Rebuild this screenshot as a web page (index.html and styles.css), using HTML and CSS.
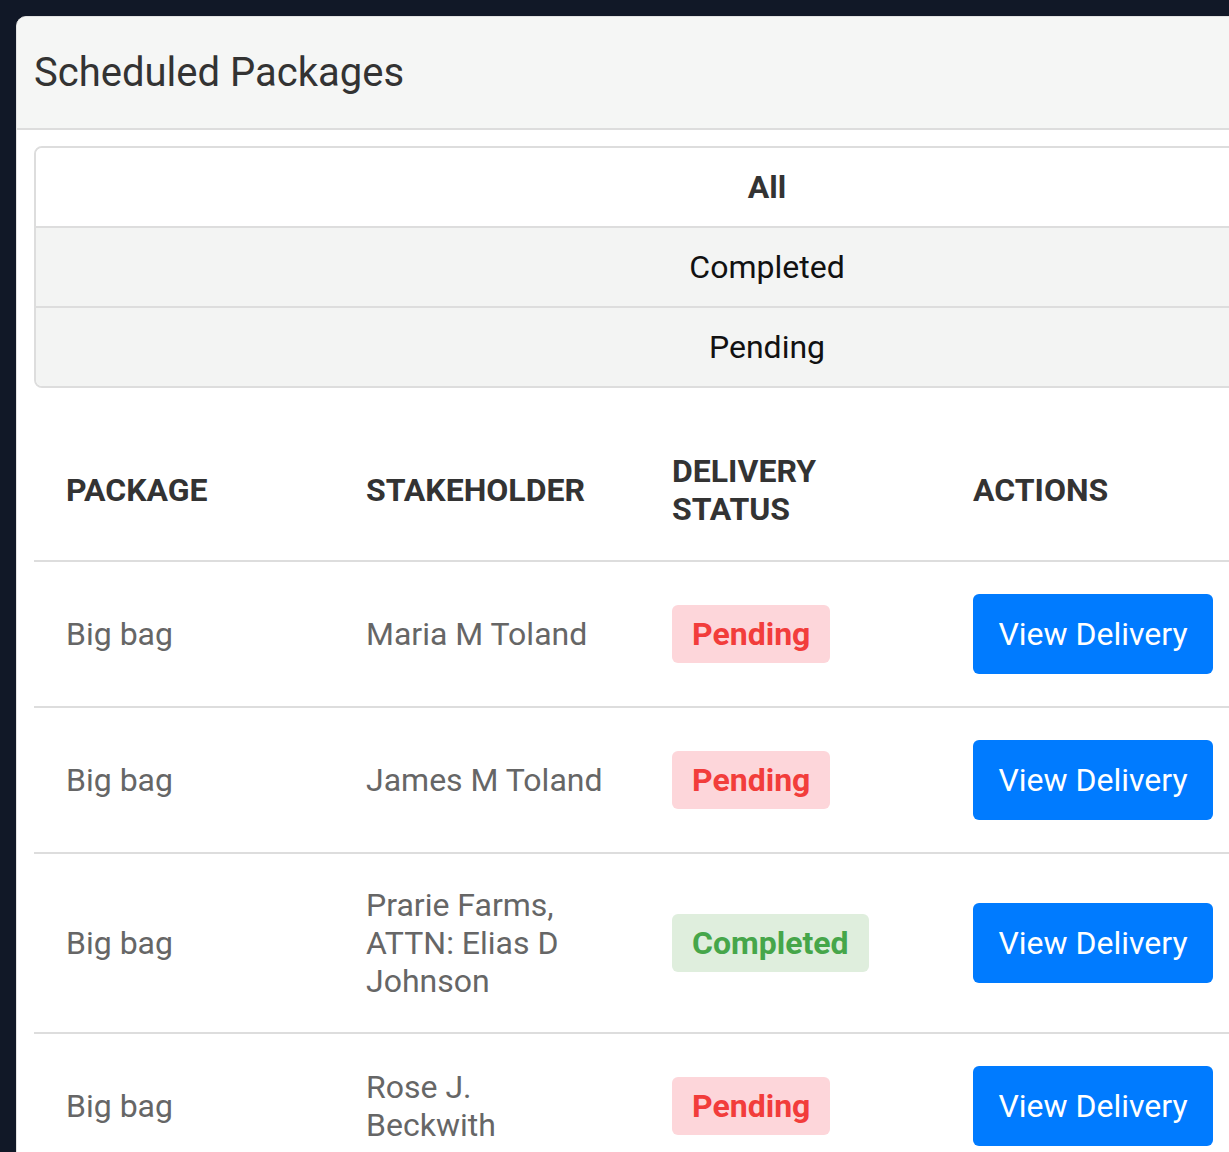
FILE: index.html
```html
<!DOCTYPE html>
<html lang="en">
<head>
<meta charset="utf-8">
<title>Scheduled Packages</title>
<link rel="stylesheet" href="styles.css">
</head>
<body>
<div class="card">
  <div class="card-header">
    <h1 class="card-title">Scheduled Packages</h1>
  </div>
  <div class="card-body">
    <ul class="filter-list">
      <li class="filter-item active">All</li>
      <li class="filter-item">Completed</li>
      <li class="filter-item">Pending</li>
    </ul>
    <table class="packages">
      <colgroup>
        <col class="col-package">
        <col class="col-stakeholder">
        <col class="col-status">
        <col class="col-actions">
      </colgroup>
      <thead>
        <tr>
          <th>Package</th>
          <th>Stakeholder</th>
          <th>Delivery<br>Status</th>
          <th>Actions</th>
        </tr>
      </thead>
      <tbody>
        <tr>
          <td>Big bag</td>
          <td>Maria M Toland</td>
          <td><span class="badge badge-pending">Pending</span></td>
          <td><button class="btn">View Delivery</button></td>
        </tr>
        <tr>
          <td>Big bag</td>
          <td>James M Toland</td>
          <td><span class="badge badge-pending">Pending</span></td>
          <td><button class="btn">View Delivery</button></td>
        </tr>
        <tr>
          <td>Big bag</td>
          <td>Prarie Farms,<br>ATTN: Elias D<br>Johnson</td>
          <td><span class="badge badge-completed">Completed</span></td>
          <td><button class="btn">View Delivery</button></td>
        </tr>
        <tr>
          <td>Big bag</td>
          <td>Rose J.<br>Beckwith</td>
          <td><span class="badge badge-pending">Pending</span></td>
          <td><button class="btn">View Delivery</button></td>
        </tr>
      </tbody>
    </table>
  </div>
</div>
</body>
</html>
```
FILE: styles.css
```css
html, body {
  margin: 0;
  padding: 0;
  overflow: hidden;
}
body {
  background: #111827;
  font-family: Roboto, "Liberation Sans", Arial, sans-serif;
  padding: 16px 0 0 16px;
}
.card {
  width: 1500px;
  background: #ffffff;
  border: 1px solid #e2e2e2;
  border-radius: 10px;
  overflow: hidden;
}
.card-header {
  height: 111px;
  background: #f5f6f5;
  border-bottom: 2px solid #dddddd;
  display: flex;
  align-items: center;
  padding: 0 17px;
}
.card-title {
  margin: 0;
  font-size: 40px;
  font-weight: 400;
  color: #333333;
}
.card-body {
  padding: 16px 17px 0 17px;
}
.filter-list {
  list-style: none;
  margin: 0;
  padding: 0;
  border: 2px solid #dddddd;
  border-radius: 8px;
  overflow: hidden;
}
.filter-item {
  height: 78px;
  display: flex;
  align-items: center;
  justify-content: center;
  background: #f3f4f3;
  font-size: 32px;
  color: #111111;
}
.filter-item + .filter-item {
  border-top: 2px solid #dddddd;
}
.filter-item.active {
  background: #ffffff;
  font-weight: 700;
  color: #333333;
}
.packages {
  margin-top: 32px;
  width: 1464px;
  border-collapse: collapse;
  table-layout: fixed;
}
.col-package { width: 300px; }
.col-stakeholder { width: 306px; }
.col-status { width: 301px; }
.packages th,
.packages td {
  padding: 32px;
  text-align: left;
  vertical-align: middle;
  font-size: 32px;
  line-height: 38px;
  border-bottom: 2px solid #dddddd;
}
.packages th {
  font-weight: 700;
  text-transform: uppercase;
  color: #333333;
}
.packages td {
  color: #666666;
}
.badge {
  display: inline-block;
  padding: 10px 20px;
  border-radius: 6px;
  font-weight: 700;
  font-size: 32px;
  line-height: 38px;
}
.badge-pending {
  background: #fdd6da;
  color: #f23d3b;
}
.badge-completed {
  background: #dfeedd;
  color: #46a64a;
}
.btn {
  display: inline-block;
  width: 240px;
  height: 80px;
  border: 0;
  border-radius: 6px;
  background: #007bff;
  color: #ffffff;
  font-family: inherit;
  font-size: 32px;
  padding: 0;
}
```
